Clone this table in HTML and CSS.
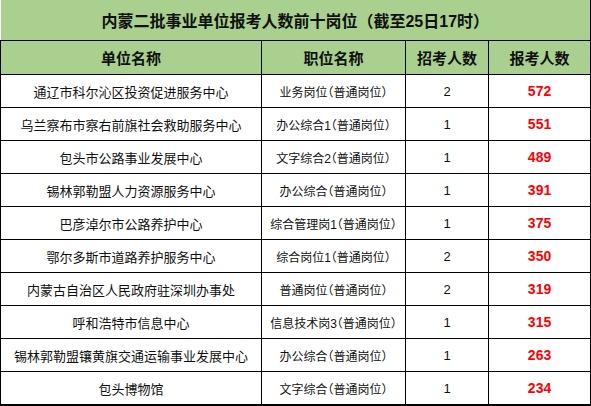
FILE: index.html
```html
<!DOCTYPE html>
<html lang="zh">
<head>
<meta charset="utf-8">
<link rel="stylesheet" href="styles.css">
</head>
<body>
<table class="sheet">
  <colgroup>
    <col class="c1"><col class="c2"><col class="c3"><col class="c4">
  </colgroup>
  <thead>
    <tr class="title"><th colspan="4">内蒙二批事业单位报考人数前十岗位（截至25日17时）</th></tr>
    <tr class="head"><th>单位名称</th><th>职位名称</th><th>招考人数</th><th>报考人数</th></tr>
  </thead>
  <tbody>
    <tr><td>通辽市科尔沁区投资促进服务中心</td><td class="pos">业务岗位（普通岗位）</td><td>2</td><td class="num">572</td></tr>
    <tr><td>乌兰察布市察右前旗社会救助服务中心</td><td class="pos">办公综合1（普通岗位）</td><td>1</td><td class="num">551</td></tr>
    <tr><td>包头市公路事业发展中心</td><td class="pos">文字综合2（普通岗位）</td><td>1</td><td class="num">489</td></tr>
    <tr><td>锡林郭勒盟人力资源服务中心</td><td class="pos">办公综合（普通岗位）</td><td>1</td><td class="num">391</td></tr>
    <tr><td>巴彦淖尔市公路养护中心</td><td class="pos">综合管理岗1（普通岗位）</td><td>1</td><td class="num">375</td></tr>
    <tr><td>鄂尔多斯市道路养护服务中心</td><td class="pos">综合岗位1（普通岗位）</td><td>2</td><td class="num">350</td></tr>
    <tr><td>内蒙古自治区人民政府驻深圳办事处</td><td class="pos">普通岗位（普通岗位）</td><td>2</td><td class="num">319</td></tr>
    <tr><td>呼和浩特市信息中心</td><td class="pos">信息技术岗3（普通岗位）</td><td>1</td><td class="num">315</td></tr>
    <tr><td>锡林郭勒盟镶黄旗交通运输事业发展中心</td><td class="pos">办公综合（普通岗位）</td><td>1</td><td class="num">263</td></tr>
    <tr><td>包头博物馆</td><td class="pos">文字综合（普通岗位）</td><td>1</td><td class="num">234</td></tr>
  </tbody>
</table>
</body>
</html>
```
FILE: styles.css
```css
html, body {
  margin: 0;
  padding: 0;
  background: #ffffff;
}
.sheet {
  border-collapse: collapse;
  table-layout: fixed;
  width: 590px;
  font-family: "Liberation Sans", "Noto Sans CJK SC", sans-serif;
  color: #111;
}
.c1 { width: 261px; }
.c2 { width: 144px; }
.c3 { width: 83px; }
.c4 { width: 102px; }
.sheet th, .sheet td {
  border: 1px solid #000;
  padding: 0;
  text-align: center;
  vertical-align: middle;
  white-space: nowrap;
  overflow: hidden;
}
.sheet th {
  background: #a9d08e;
  font-weight: bold;
}
.title th {
  height: 40px;
  font-size: 16px;
  border-top: none;
  border-left: none;
}
.head th {
  height: 33px;
  font-size: 15px;
}
.sheet td {
  height: 32px;
  font-size: 13px;
}
.sheet td.pos {
  font-size: 12px;
  font-feature-settings: "halt" 1;
}
.sheet td.num {
  color: #ff0000;
  font-weight: bold;
  font-size: 14px;
}
.sheet tbody tr:last-child td {
  border-bottom-width: 2px;
}
```
